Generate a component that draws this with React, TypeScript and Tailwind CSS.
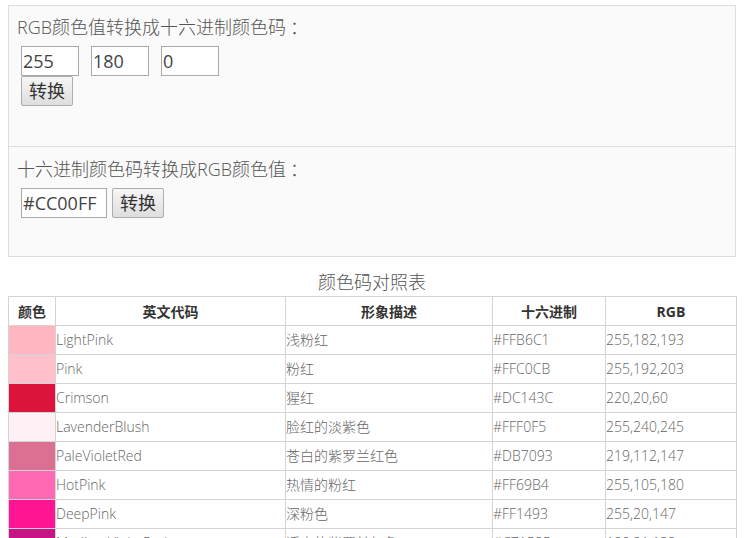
import React from "react";

const rows: [string, string, string, string][] = [
  ["LightPink", "浅粉红", "#FFB6C1", "255,182,193"],
  ["Pink", "粉红", "#FFC0CB", "255,192,203"],
  ["Crimson", "猩红", "#DC143C", "220,20,60"],
  ["LavenderBlush", "脸红的淡紫色", "#FFF0F5", "255,240,245"],
  ["PaleVioletRed", "苍白的紫罗兰红色", "#DB7093", "219,112,147"],
  ["HotPink", "热情的粉红", "#FF69B4", "255,105,180"],
  ["DeepPink", "深粉色", "#FF1493", "255,20,147"],
  ["MediumVioletRed", "适中的紫罗兰红色", "#C71585", "199,21,133"],
  ["Orchid", "兰花的紫色", "#DA70D6", "218,112,214"],
];

const font = { fontFamily: '"Open Sans","Noto Sans CJK SC",sans-serif' };

function Btn() {
  return (
    <button className="h-[30px] w-[52px] rounded-[2px] border border-[#adadad] bg-gradient-to-b from-[#f6f6f6] to-[#dedede] text-[18px] leading-none text-[#333]">
      转换
    </button>
  );
}

export default function App() {
  return (
    <div className="h-[538px] overflow-hidden bg-white px-[8px] pt-[5px] text-[#555]" style={font}>
      <div className="border border-[#ddd] bg-[#fafafa]">
        <div className="h-[140px] pl-[8px] pt-[8px]">
          <div className="h-[26px] text-[18px] leading-[26px] font-light">
            RGB颜色值转换成十六进制颜色码<span className="pl-[4px]">：</span>
          </div>
          <div className="mt-[6px] flex gap-[12px] pl-[4px]">
            <input defaultValue="255" className="h-[30px] w-[58px] border border-[#a9a9a9] bg-white px-[1px] text-[18px] text-[#444] outline-none" />
            <input defaultValue="180" className="h-[30px] w-[58px] border border-[#a9a9a9] bg-white px-[1px] text-[18px] text-[#444] outline-none" />
            <input defaultValue="0" className="h-[30px] w-[58px] border border-[#a9a9a9] bg-white px-[1px] text-[18px] text-[#444] outline-none" />
          </div>
          <div className="pl-[4px]">
            <Btn />
          </div>
        </div>
        <div className="h-[110px] border-t border-[#ddd] pl-[8px] pt-[9px]">
          <div className="h-[26px] text-[18px] leading-[26px] font-light">
            十六进制颜色码转换成RGB颜色值<span className="pl-[4px]">：</span>
          </div>
          <div className="mt-[6px] flex gap-[5px] pl-[4px]">
            <input defaultValue="#CC00FF" className="h-[30px] w-[86px] border border-[#a9a9a9] bg-white px-[1px] text-[18px] text-[#444] outline-none" />
            <Btn />
          </div>
        </div>
      </div>
      <div className="mt-[12px] text-center text-[18px] leading-[27px] font-light">颜色码对照表</div>
      <table className="w-[728px] table-fixed border-collapse text-[14px]">
        <colgroup>
          <col className="w-[47px]" />
          <col className="w-[230px]" />
          <col className="w-[207px]" />
          <col className="w-[113px]" />
          <col className="w-[131px]" />
        </colgroup>
        <thead>
          <tr className="h-[29px] text-[#333]">
            {["颜色", "英文代码", "形象描述", "十六进制", "RGB"].map((h) => (
              <th key={h} className="border border-[#d4d4d4] p-0 text-center font-bold">
                {h}
              </th>
            ))}
          </tr>
        </thead>
        <tbody>
          {rows.map(([en, zh, hex, rgb]) => (
            <tr key={en} className="h-[29px] text-[#666]">
              <td className="border border-[#d4d4d4] p-0" style={{ backgroundColor: hex }}></td>
              <td className="border border-[#d4d4d4] p-0 pb-[1px] font-light">{en}</td>
              <td className="border border-[#d4d4d4] p-0 pb-[1px] font-light">{zh}</td>
              <td className="border border-[#d4d4d4] p-0 pb-[1px] font-light">{hex}</td>
              <td className="border border-[#d4d4d4] p-0 pb-[1px] font-light">{rgb}</td>
            </tr>
          ))}
        </tbody>
      </table>
    </div>
  );
}
